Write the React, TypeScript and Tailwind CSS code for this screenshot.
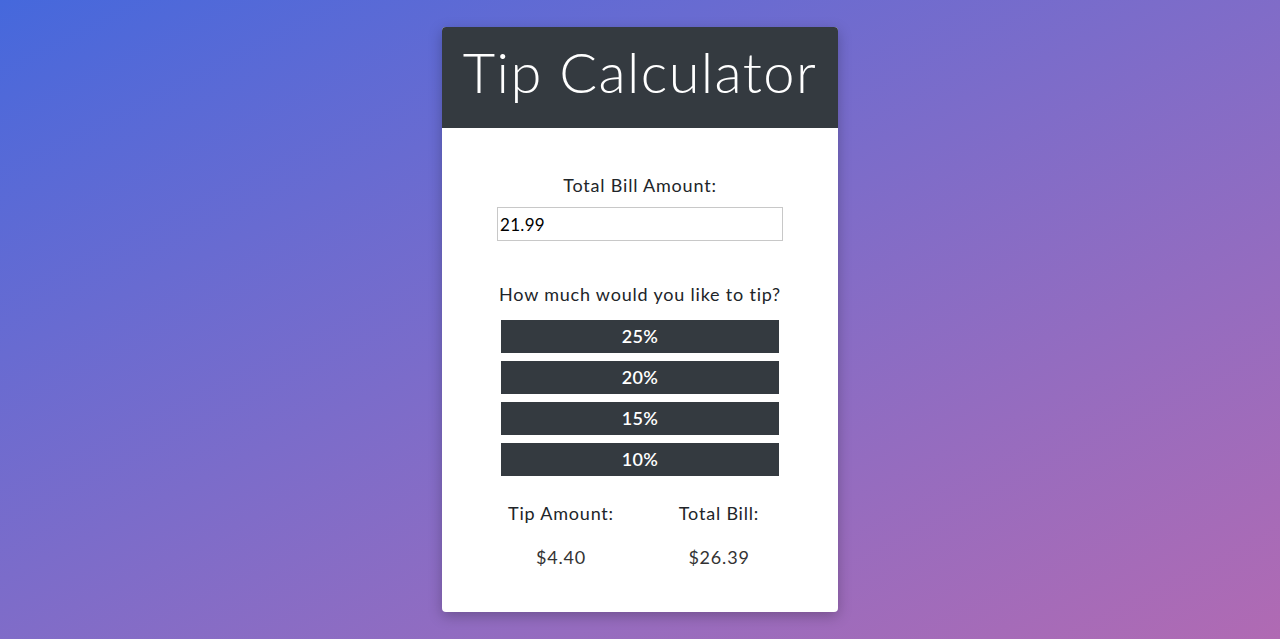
export default function App() {
  const tips = ['25%', '20%', '15%', '10%']

  return (
    <div className="min-h-[639px] w-full bg-gradient-to-br from-[#4568dc] to-[#b06ab3] pt-[27px] font-['Lato','Liberation_Sans',sans-serif] text-[#212529]">
      <div className="mx-auto w-[396px] overflow-hidden rounded-[4px] bg-white shadow-[0_4px_14px_rgba(0,0,0,0.25)]">
        {/* Header */}
        <div className="flex h-[101px] items-center justify-center bg-[#343a40] pb-[12px]">
          <h1 className="text-[56px] font-light leading-none tracking-[1.4px] text-white">Tip Calculator</h1>
        </div>

        <div className="flex flex-col items-center pt-[45px] pb-[43px] tracking-[0.8px]">
          {/* Bill input */}
          <label className="text-[18px] leading-[24px]">Total Bill Amount:</label>
          <input
            type="text"
            defaultValue="21.99"
            className="mt-[10px] h-[34px] w-[286px] border border-[#c8c8c8] px-[2px] text-[17px] tracking-[0.3px] text-black outline-none"
          />

          {/* Tip buttons */}
          <p className="mt-[41px] text-[18px] leading-[24px]">How much would you like to tip?</p>
          <div className="mt-[14px] flex flex-col gap-[8px]">
            {tips.map((t) => (
              <button
                key={t}
                className="h-[33px] w-[278px] bg-[#343a40] text-[18px] font-semibold tracking-[0.3px] text-white"
              >
                {t}
              </button>
            ))}
          </div>

          {/* Results */}
          <div className="mt-[25px] grid w-[316px] grid-cols-2 text-center text-[18px]">
            <div className="flex flex-col items-center gap-[20px]">
              <span className="leading-[24px]">Tip Amount:</span>
              <span className="leading-[24px] text-[#333]">$4.40</span>
            </div>
            <div className="flex flex-col items-center gap-[20px]">
              <span className="leading-[24px]">Total Bill:</span>
              <span className="leading-[24px] text-[#333]">$26.39</span>
            </div>
          </div>
        </div>
      </div>
    </div>
  )
}
